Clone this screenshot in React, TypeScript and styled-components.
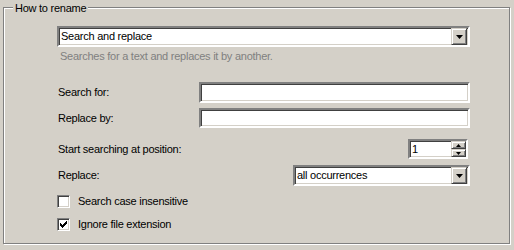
import styled, {createGlobalStyle} from 'styled-components'

const GlobalStyle = createGlobalStyle`
  html, body {
    margin: 0;
    padding: 0;
    background: #d4d0c8;
  }
  body {
    font-family: "Liberation Sans", Arial, sans-serif;
    font-size: 11px;
    letter-spacing: -0.25px;
    color: #000;
  }
`

const Page = styled.div`
  width: 514px;
  height: 250px;
  background: #d4d0c8;
  padding: 7px 0 0 3px;
  box-sizing: border-box;
`

const GroupBox = styled.div`
  position: relative;
  width: 507px;
  height: 237px;
  box-sizing: border-box;
  border: 1px solid #808080;
  box-shadow: inset 1px 1px 0 #fff, 1px 1px 0 #fff;
  padding: 18px 0 0 53px;
`

const Legend = styled.span`
  position: absolute;
  top: -6px;
  left: 9px;
  padding: 0 2px;
  background: #d4d0c8;
  line-height: 13px;
`

const Content = styled.div`
  width: 413px;
  display: flex;
  flex-direction: column;
`

const Sunken = styled.div<{$width?: number; $height?: number}>`
  box-sizing: border-box;
  width: ${p => (p.$width ? `${p.$width}px` : '100%')};
  height: ${p => p.$height ?? 21}px;
  background: #fff;
  border-style: solid;
  border-width: 2px;
  border-color: #808080 #fff #fff #808080;
  box-shadow: inset 1px 1px 0 #404040, inset -1px -1px 0 #d4d0c8;
  display: flex;
  align-items: center;
  position: relative;
`

const FieldText = styled.span`
  padding-left: 2px;
  flex: 1;
  line-height: 13px;
`

const RaisedButton = styled.div<{$height: number}>`
  box-sizing: border-box;
  width: 16px;
  height: ${p => p.$height}px;
  background: #d4d0c8;
  border-style: solid;
  border-width: 1px;
  border-color: #d4d0c8 #404040 #404040 #d4d0c8;
  box-shadow: inset 1px 1px 0 #fff, inset -1px -1px 0 #808080;
  display: flex;
  align-items: center;
  justify-content: center;
`

const ComboButton = styled(RaisedButton)`
  margin-right: 1px;
`

function Arrow({down = true, w = 7}: {down?: boolean; w?: number}) {
  const h = Math.ceil(w / 2)
  const pts = down ? `0,0 ${w},0 ${w / 2},${h}` : `${w / 2},0 ${w},${h} 0,${h}`
  return (
    <svg width={w} height={h} viewBox={`0 0 ${w} ${h}`} style={{display: 'block'}}>
      <polygon points={pts} fill="#000" />
    </svg>
  )
}

function Combo({value, width}: {value: string; width?: number}) {
  return (
    <Sunken $width={width}>
      <FieldText>{value}</FieldText>
      <ComboButton $height={17}>
        <Arrow />
      </ComboButton>
    </Sunken>
  )
}

const Hint = styled.div`
  color: #808080;
  margin: 3px 0 0 3px;
  line-height: 13px;
`

const FormRow = styled.div<{$top: number}>`
  display: flex;
  align-items: center;
  justify-content: space-between;
  margin-top: ${p => p.$top}px;
  padding-left: 1px;
`

const Label = styled.span`
  line-height: 13px;
`

const SpinButtons = styled.div`
  display: flex;
  flex-direction: column;
`

const SpinButton = styled(RaisedButton)`
  width: 15px;
`

const CheckRow = styled.label<{$top: number}>`
  display: flex;
  align-items: center;
  gap: 8px;
  margin-top: ${p => p.$top}px;
`

const CheckBox = styled.span`
  box-sizing: border-box;
  width: 13px;
  height: 13px;
  background: #fff;
  border-style: solid;
  border-width: 1px;
  border-color: #808080 #fff #fff #808080;
  box-shadow: inset 1px 1px 0 #404040, inset -1px -1px 0 #d4d0c8;
  display: flex;
  align-items: center;
  justify-content: center;
`

function Check({checked}: {checked?: boolean}) {
  return (
    <CheckBox>
      {checked && (
        <svg width="7" height="7" viewBox="0 0 7 7" style={{display: 'block'}}>
          <path d="M0 2h1v1h1v1h1v-1h1v-1h1v-1h1v-1h1v3h-1v1h-1v1h-1v1h-1v1h-1v-1h-1v-1h-1z" fill="#000" />
        </svg>
      )}
    </CheckBox>
  )
}

export default function App() {
  return (
    <>
      <GlobalStyle />
      <Page>
        <GroupBox>
          <Legend>How to rename</Legend>
          <Content>
            <Combo value="Search and replace" />
            <Hint>Searches for a text and replaces it by another.</Hint>

            <FormRow $top={19}>
              <Label>Search for:</Label>
              <Sunken $width={271} $height={21} />
            </FormRow>
            <FormRow $top={5}>
              <Label>Replace by:</Label>
              <Sunken $width={271} $height={20} />
            </FormRow>

            <FormRow $top={11}>
              <Label>Start searching at position:</Label>
              <Sunken $width={60} $height={20} style={{marginRight: 2}}>
                <FieldText>1</FieldText>
                <SpinButtons>
                  <SpinButton $height={8}>
                    <Arrow down={false} w={5} />
                  </SpinButton>
                  <SpinButton $height={8}>
                    <Arrow w={5} />
                  </SpinButton>
                </SpinButtons>
              </Sunken>
            </FormRow>
            <FormRow $top={6}>
              <Label>Replace:</Label>
              <Combo value="all occurrences" width={177} />
            </FormRow>

            <CheckRow $top={9}>
              <Check />
              <Label>Search case insensitive</Label>
            </CheckRow>
            <CheckRow $top={10}>
              <Check checked />
              <Label>Ignore file extension</Label>
            </CheckRow>
          </Content>
        </GroupBox>
      </Page>
    </>
  )
}
